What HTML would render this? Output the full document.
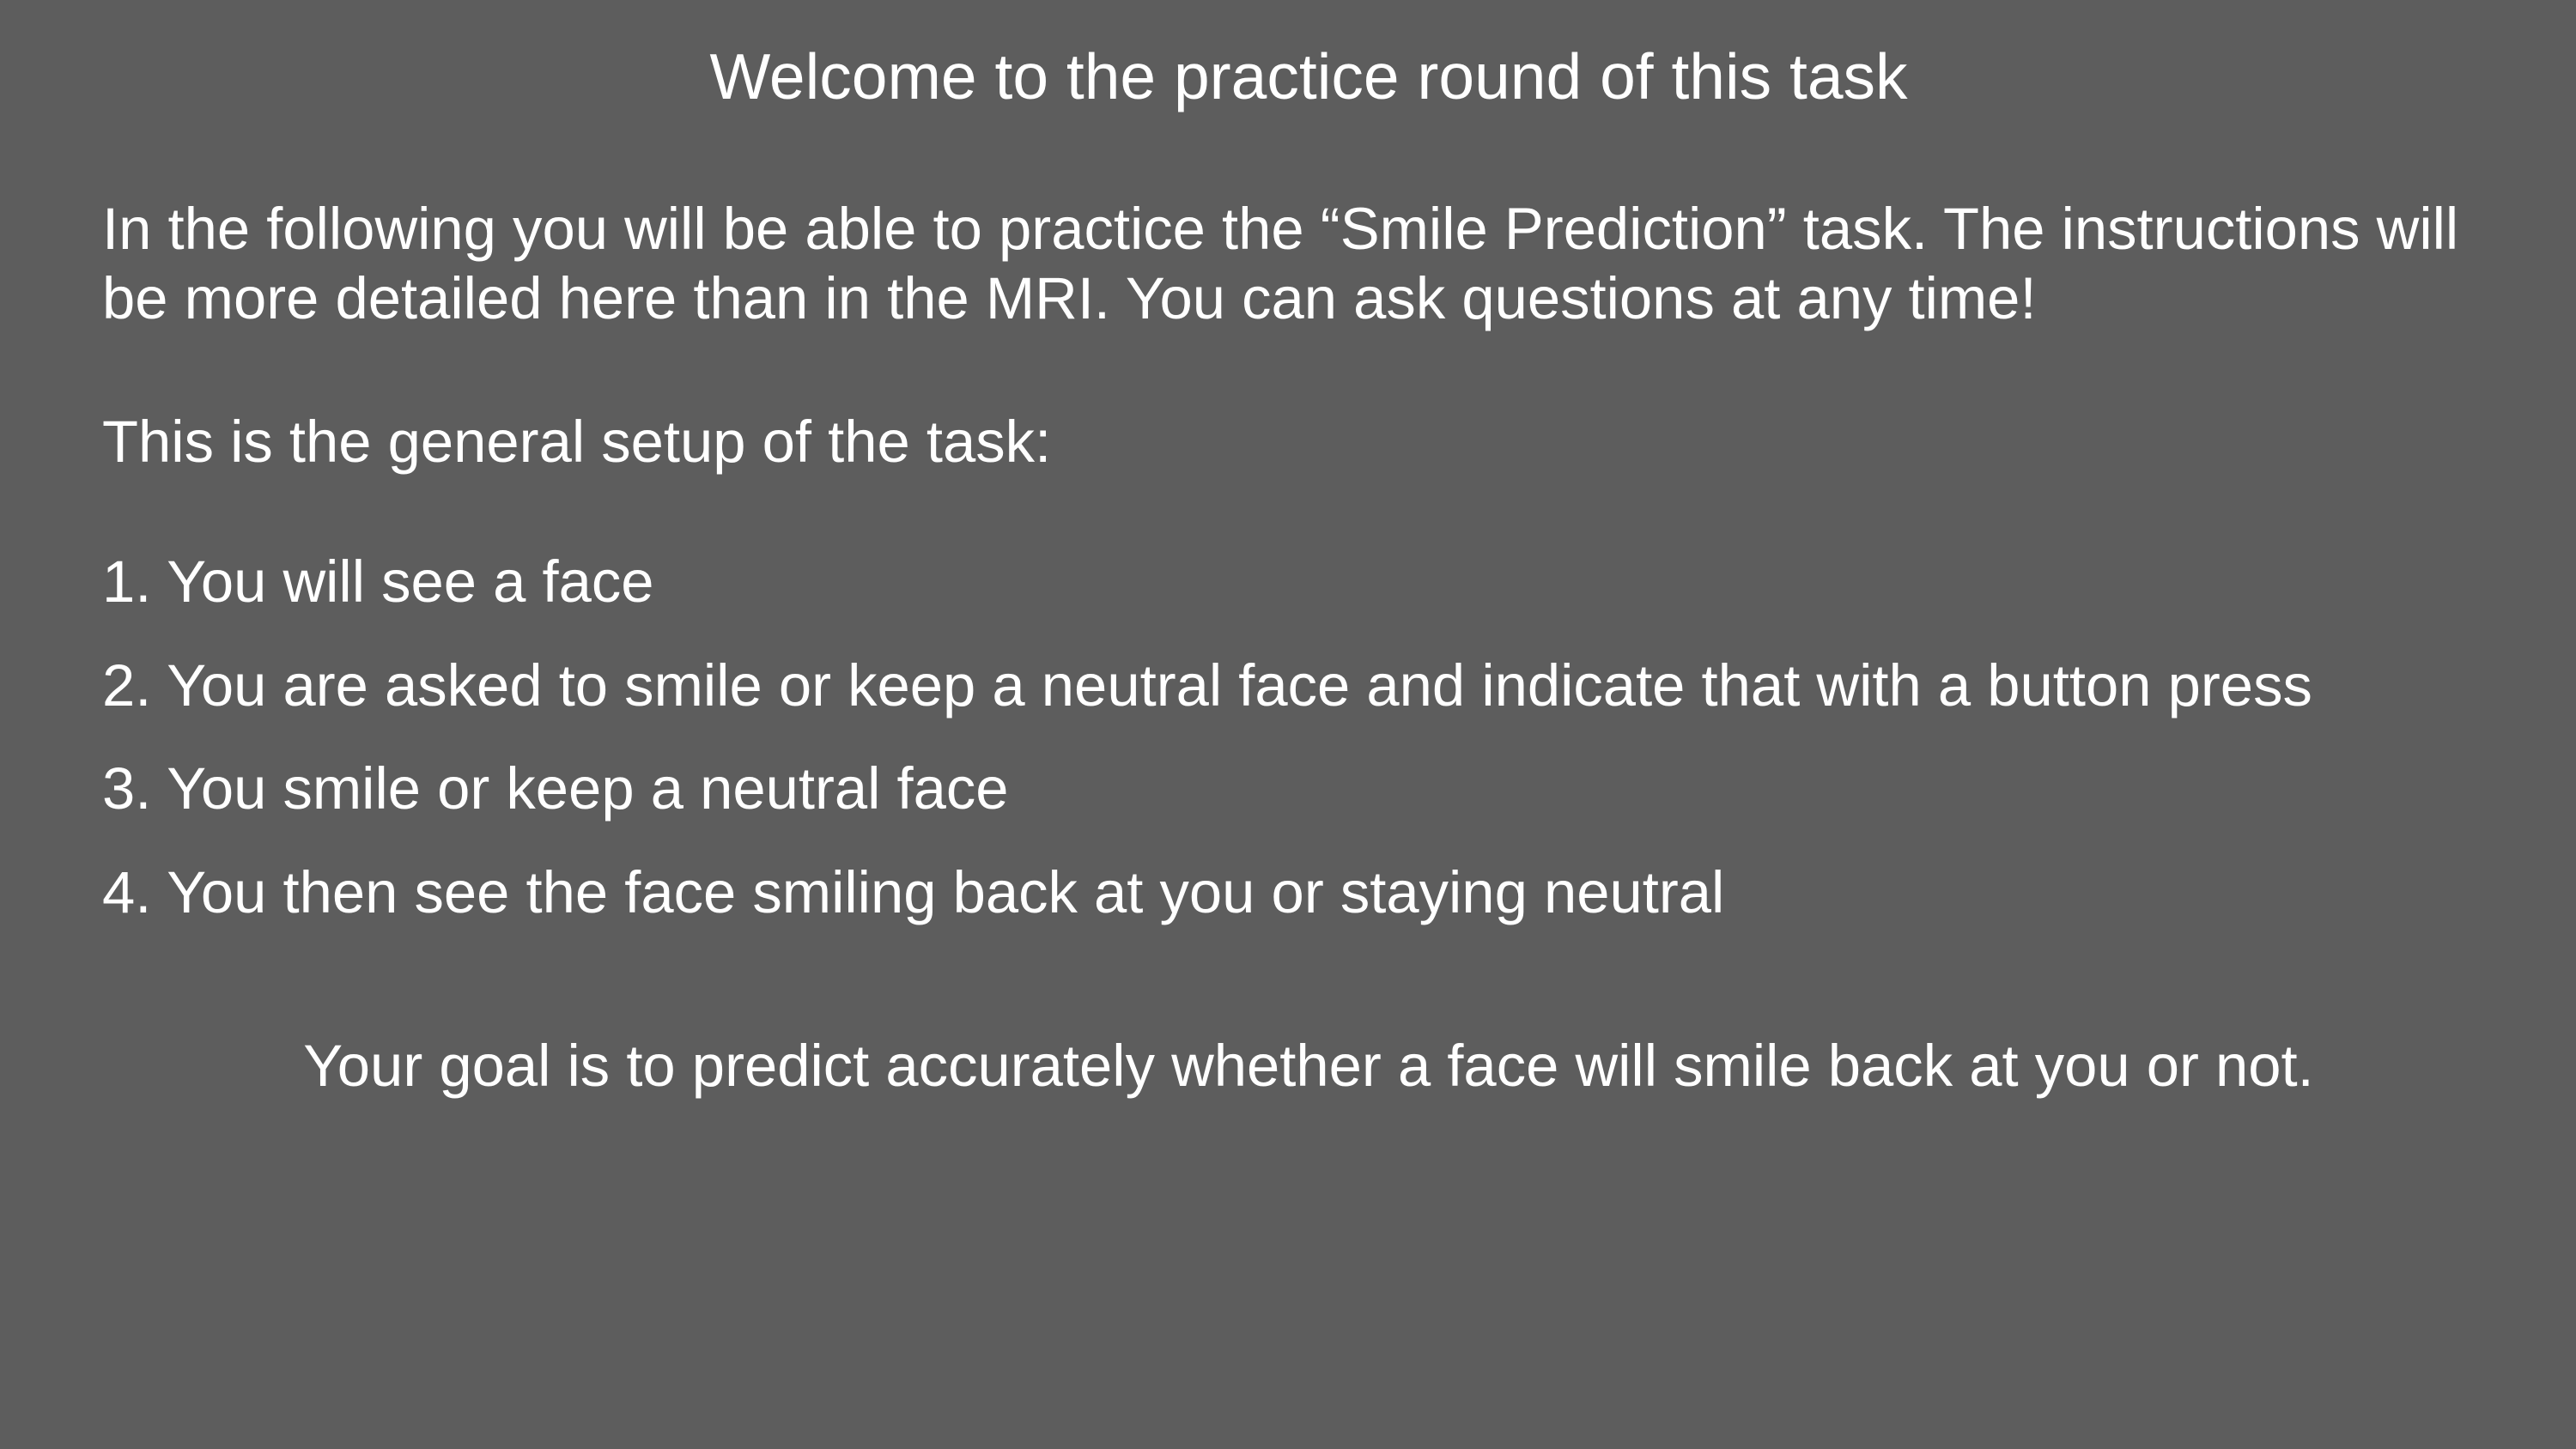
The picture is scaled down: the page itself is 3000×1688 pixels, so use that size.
<!DOCTYPE html>
<html><head><meta charset="utf-8"><style>
html,body{margin:0;padding:0}
body{width:3000px;height:1688px;background:#5d5d5d;position:relative;overflow:hidden;font-family:"Liberation Sans",Arial,sans-serif;color:#fff}
.t{position:absolute;white-space:nowrap;line-height:1;font-size:68.8px}
.c{left:0;width:3000px;text-align:center}
</style></head><body>
<div class="t c" style="top:52px;font-size:75px;left:24px">Welcome to the practice round of this task</div>
<div class="t" style="left:119px;top:233px">In the following you will be able to practice the “Smile Prediction” task. The instructions will</div>
<div class="t" style="left:119px;top:314px">be more detailed here than in the MRI. You can ask questions at any time!</div>
<div class="t" style="left:119px;top:481px">This is the general setup of the task:</div>
<div class="t" style="left:119px;top:644px">1. You will see a face</div>
<div class="t" style="left:119px;top:765px">2. You are asked to smile or keep a neutral face and indicate that with a button press</div>
<div class="t" style="left:119px;top:885px">3. You smile or keep a neutral face</div>
<div class="t" style="left:119px;top:1006px">4. You then see the face smiling back at you or staying neutral</div>
<div class="t c" style="top:1208px;left:24px">Your goal is to predict accurately whether a face will smile back at you or not.</div>
</body></html>
